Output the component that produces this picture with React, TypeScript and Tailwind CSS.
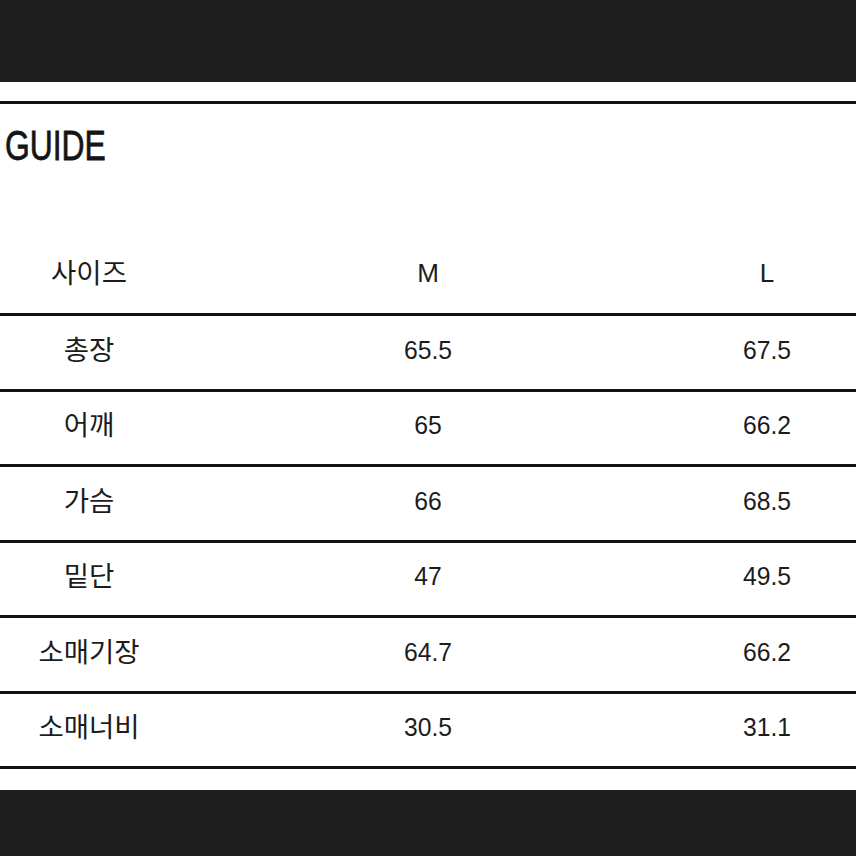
const rows: [string, string, string][] = [
  ["총장", "65.5", "67.5"],
  ["어깨", "65", "66.2"],
  ["가슴", "66", "68.5"],
  ["밑단", "47", "49.5"],
  ["소매기장", "64.7", "66.2"],
  ["소매너비", "30.5", "31.1"],
];

const font = { fontFamily: '"Liberation Sans", "Noto Sans CJK KR", sans-serif' };

export default function App() {
  return (
    <div className="w-[856px] h-[856px] flex flex-col bg-[#1f1f1f]" style={font}>
      <div className="h-[82px] shrink-0 bg-[#1f1f1f]" />
      <div className="h-[708px] shrink-0 bg-white flex flex-col">
        <div className="mt-[19px] h-[3px] bg-[#111]" />
        <div className="h-[133px] px-[5px] pt-[20px]">
          <h1
            className="text-[43px] leading-[43px] text-[#151515] origin-left scale-x-[0.74]"
            style={{ WebkitTextStroke: "0.8px #151515" }}
          >
            GUIDE
          </h1>
        </div>
        <div className="grid grid-cols-[178px_500px_178px] h-[76px] items-center text-[26px] text-[#1c1c1c] pb-[3px]">
          <div className="text-center text-[27.5px]">사이즈</div>
          <div className="text-center">M</div>
          <div className="text-center">L</div>
        </div>
        {rows.map(([label, m, l]) => (
          <div
            key={label}
            className="grid grid-cols-[178px_500px_178px] h-[75.5px] items-center border-t-[3px] border-[#111] text-[26px] text-[#1c1c1c] pb-[4px]"
          >
            <div className="text-center text-[27.5px]">{label}</div>
            <div className="text-center scale-x-[0.95]">{m}</div>
            <div className="text-center scale-x-[0.95]">{l}</div>
          </div>
        ))}
        <div className="h-[3px] bg-[#111]" />
      </div>
    </div>
  );
}
